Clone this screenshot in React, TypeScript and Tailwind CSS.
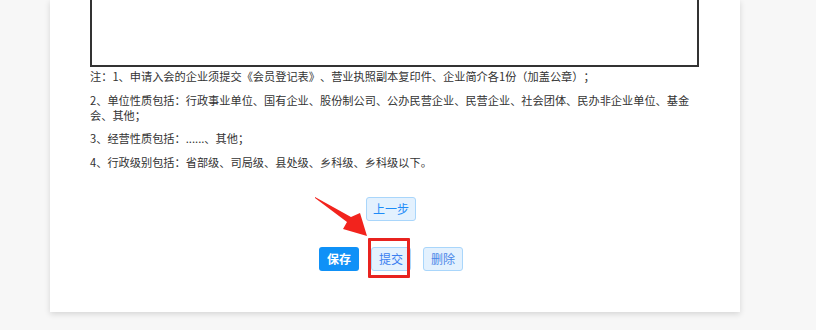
import React from "react";

export default function App() {
  const font = {
    fontFamily: '"Noto Sans CJK SC", "Noto Sans", sans-serif',
  } as React.CSSProperties;
  return (
    <div
      className="relative h-[330px] w-[816px] overflow-hidden bg-[#f7f7f7] [text-spacing-trim:space-all]"
      style={font}
    >
      <div className="ml-[50px] flex h-[312px] w-[690px] flex-col bg-white pl-[40px] shadow-[0_2px_6px_rgba(0,0,0,0.14)]">
        <div className="h-[67px] w-[609px] border-2 border-t-0 border-[#333]" />
        <div className="mt-[2px] w-[609px] text-[11.2px] leading-[15px] text-[#333]">
          <p className="mb-[8.5px]">
            注：1、申请入会的企业须提交《会员登记表》、营业执照副本复印件、企业简介各1份（加盖公章）；
          </p>
          <p className="mb-[8.5px]">
            2、单位性质包括：行政事业单位、国有企业、股份制公司、公办民营企业、民营企业、社会团体、民办非企业单位、基金会、其他；
          </p>
          <p className="mb-[8.5px]">3、经营性质包括：......、其他；</p>
          <p>4、行政级别包括：省部级、司局级、县处级、乡科级、乡科级以下。</p>
        </div>
        <div className="-ml-[40px] flex flex-col items-center pr-[8px]">
          <button className="mt-[27px] h-[24px] w-[50px] rounded-[3px] border border-[#a9d6fb] bg-[#e3f1fe] text-[12px] text-[#1d8cf8]">
            上一步
          </button>
          <div className="mt-[26px] flex gap-[12px]">
            <button className="h-[24px] w-[40px] rounded-[3px] bg-[#0f91f7] text-[12px] font-bold text-white">
              保存
            </button>
            <button className="h-[24px] w-[40px] rounded-[3px] border border-[#a9d6fb] bg-[#e3f1fe] text-[12px] text-[#3a7ff0]">
              提交
            </button>
            <button className="h-[24px] w-[40px] rounded-[3px] border border-[#a9d6fb] bg-[#e3f1fe] text-[12px] text-[#4a86e8]">
              删除
            </button>
          </div>
        </div>
      </div>

      {/* annotation: red box */}
      <div className="absolute left-[368px] top-[238px] h-[40px] w-[42px] rounded-[1px] border-[3px] border-[#e8231f]" />
      {/* annotation: red arrow */}
      <svg
        className="absolute left-[300px] top-[185px]"
        width="80"
        height="60"
        viewBox="0 0 80 60"
      >
        <polygon
          points="15,12 51,32 60,28 67,51 43,44 47,37 15,13"
          fill="#f2231d"
        />
      </svg>
    </div>
  );
}
